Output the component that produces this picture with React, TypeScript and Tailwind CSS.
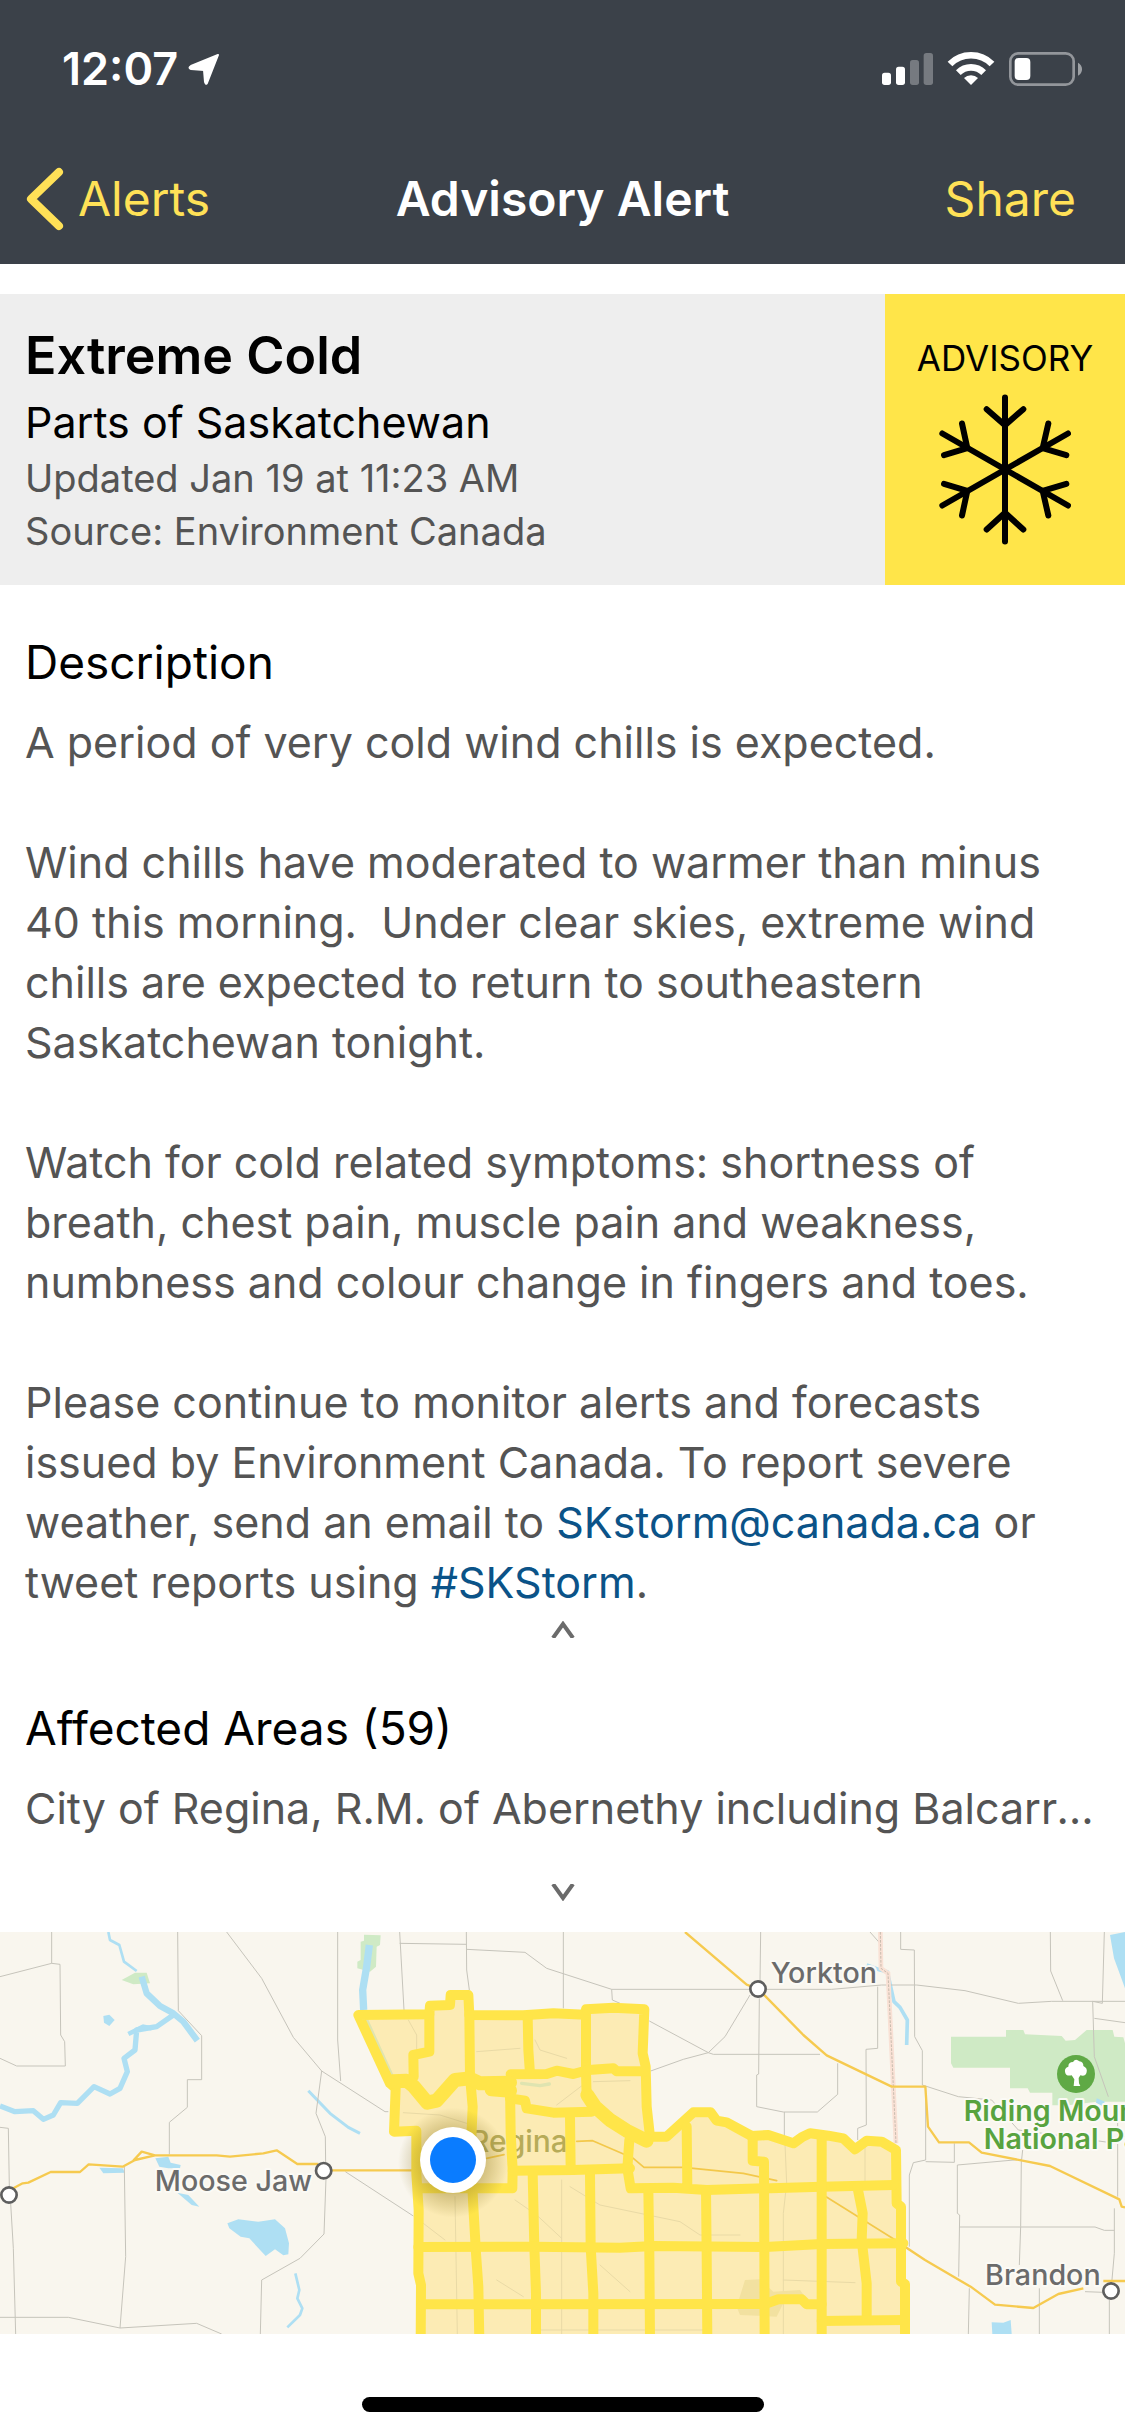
import { useState } from "react";

const AREAS = "City of Regina, R.M. of Abernethy including Balcarres, R.M. of Antler including Redvers";

function StatusIcons() {
  return (
    <svg viewBox="60 60 612 114" className="w-[204px] h-[38px]" aria-hidden="true">
      <g fill="#fff">
        <rect x="66" y="128" width="27" height="37" rx="8" />
        <rect x="108" y="110" width="27" height="55" rx="8" />
        <rect x="150" y="90" width="27" height="75" rx="8" opacity="0.3" />
        <rect x="191" y="69" width="28" height="96" rx="8" opacity="0.3" />
        <path d="M333 165 L312 144 A30 30 0 0 1 354 144 Z" />
        <rect x="464" y="84" width="47" height="66" rx="12" />
        <path d="M654 98 Q666 104 666 118 Q666 131 654 137 Z" opacity="0.5" />
      </g>
      <g fill="none" stroke="#fff" strokeWidth="20">
        <path d="M270 102 A89 89 0 0 1 396 102" />
        <path d="M295 128 A54 54 0 0 1 371 128" />
      </g>
      <rect x="451" y="70" width="190" height="94" rx="24" fill="none" stroke="#fff" strokeOpacity="0.45" strokeWidth="8" />
    </svg>
  );
}

function Snowflake() {
  return (
    <svg viewBox="237 344 396 452" className="w-[132px] h-[151px]" aria-hidden="true">
      <g fill="none" stroke="#000" strokeWidth="18" strokeLinecap="round" strokeLinejoin="round">
        <path d="M435 354 V786 M247 462 L624 678 M624 462 L247 678" />
        <path d="M380 389 L435 437 L490 389 M380 750 L435 700 L490 750" />
        <path d="M306 432 L322 506 L252 527 M565 432 L548 506 L619 527" />
        <path d="M306 708 L322 634 L252 613 M565 708 L548 634 L619 613" />
      </g>
    </svg>
  );
}

function Toggle({ open, label, onClick }: { open: boolean; label: string; onClick: () => void }) {
  return (
    <button onClick={onClick} aria-label={label} aria-expanded={open} className="block mx-auto">
      <svg viewBox="0 0 24 17" className="w-6 h-[17px]" aria-hidden="true">
        <path
          d={open ? "M2 17 L12 3 L22 17" : "M2 0 L12 14 L22 0"}
          fill="none"
          stroke="#6b6b6b"
          strokeWidth="4"
        />
      </svg>
    </button>
  );
}

const OUTLINE =
  "M55 285 L268 283 L270 257 L330 255 L332 225 L385 225 L388 285 L550 286 L640 280 L735 284 L738 268 L820 263 L913 268 L908 400 L917 440 L920 560 L930 650 L980 650 L1060 577 L1112 577 L1130 602 L1160 607 L1235 648 L1285 645 L1360 670 L1385 652 L1410 640 L1465 647 L1510 655 L1545 688 L1580 662 L1625 665 L1668 690 L1670 850 L1683 860 L1683 1085 L1695 1092 L1695 1280 L242 1280 L243 1095 L235 1060 L236 870 L229 760 L229 632 L162 635 L167 505 L150 490 Z";

function AreaMap() {
  return (
    <svg
      viewBox="0 36 3375 1206"
      preserveAspectRatio="xMidYMid slice"
      className="block w-full h-[402px] bg-[#f9f6ee]"
      role="img"
      aria-label="Map of affected areas"
    >
      <defs>
        <radialGradient id="pinShadow">
          <stop offset="0.55" stopColor="#8a7420" stopOpacity="0.38" />
          <stop offset="1" stopColor="#8a7420" stopOpacity="0" />
        </radialGradient>
      </defs>

      {/* Parks */}
      <g fill="#cfeac5">
        <path d="M365 180 L405 158 L440 158 L450 190 L400 193 Z" />
        <path d="M1092 44 L1142 46 L1140 75 L1130 80 L1128 140 L1110 155 L1072 145 L1072 125 L1082 120 L1082 65 L1092 62 Z" />
        <path
          transform="translate(2175)"
          d="M678 350 H843 V330 H895 L900 343 L1010 348 L1022 362 L1050 360 L1085 330 H1163 L1168 350 L1195 352 L1200 370 V545 H1115 L1030 556 H982 V518 H915 L908 505 H855 V443 H685 L678 430 Z"
        />
      </g>

      {/* Water */}
      <g fill="none" stroke="#aedff3" strokeLinejoin="round">
        <path d="M325 36 L330 60 L358 75 L372 125 L410 153" strokeWidth="8" />
        <path d="M425 170 L440 220 L480 258 L520 280 L550 305 L592 362" strokeWidth="19" />
        <path d="M520 285 L470 320 L410 330 L405 390 L372 415 L382 455 L360 505 L330 522 L282 500 L232 550 L182 548 L160 585 L130 598 L100 572 L45 575 L0 558" strokeWidth="16" />
        <path d="M385 342 L430 320 L455 325" strokeWidth="14" />
        <path d="M925 512 L990 580 L1045 622 L1080 640" strokeWidth="9" />
        <path d="M1108 75 L1100 140 L1088 210 L1091 270" strokeWidth="22" />
        <path d="M886 1060 L898 1110 L892 1135 L907 1165 L900 1185 L862 1222" strokeWidth="8" />
        <path d="M2600 135 L2640 150 L2662 155 L2682 245 L2700 262 L2722 300 L2720 375" strokeWidth="11" />
      </g>
      <g fill="#aedff3">
        <path d="M310 288 L328 284 L344 300 L328 318 L312 308 Z" />
        <path d="M298 743 L368 745 L375 758 L310 760 Z" />
        <path d="M466 715 L505 710 L512 728 L542 735 L540 745 L505 745 L478 740 Z" />
        <path d="M532 818 L565 825 L598 860 L575 855 Z" />
        <path d="M682 910 L715 898 L775 905 L825 898 L855 925 L867 970 L865 1003 L850 1006 L825 988 L797 1008 L748 955 L722 950 L688 925 Z" />
        <path d="M3330 45 L3375 36 V205 L3355 150 L3342 115 Z" />
        <path d="M3290 535 L3315 545 L3305 557 L3288 548 Z" />
        <path d="M2975 1207 L3010 1208 L3032 1200 L3035 1242 H2977 Z" />
      </g>

      {/* Secondary roads */}
      <g fill="none" stroke="#c6c4bb" strokeWidth="3">
        <path d="M155 36 V130 L0 170 M155 130 L180 133 L182 345 L194 365 L196 438 H50 L0 415" />
        <path d="M533 36 L535 272 L605 347 V479 H562 V562 L508 607 V703" />
        <path d="M680 36 L785 175 L880 352 L965 453 L1155 575 H1165 M1013 36 V360 L1022 483 M965 453 L948 580 L976 650 L977 735 M978 775 L972 942 L900 1015 L785 1080 L781 1242" />
        <path d="M0 622 L25 625 L28 800 M32 850 L40 985 L47 1242 M0 1192 H205 L360 1224 L590 1210 L665 1242 M373 740 L377 1010 L360 1224" />
        <path d="M1036 755 L1240 888" />
        <g transform="translate(1020)">
          <path d="M179 36 L192 270 M179 70 L379 73 M379 36 L380 150 L388 210 M380 88 L555 97 L620 145 L815 208 H1250 M670 36 V265 M815 208 L817 240 L840 250 M928 303 L1105 398 L1155 350 L1230 225 M1105 398 L1120 403 H1440 M932 453 L1030 418 L1105 398" />
        </g>
        <g transform="translate(2175)">
          <path d="M107 36 L105 185 M125 208 H320 L470 195 H575 L720 212 L880 250 L980 244 H1200 M103 235 L101 462 L95 465 V560 L175 576 H277 L338 523 V430 M178 576 V650" />
          <path d="M458 200 V385 L423 388 L424 615 L398 625 V660 M435 36 L465 70" />
          <path d="M527 36 V88 L568 90 L569 350 L592 392 V495 L700 530 L800 540 L880 630 L1150 667 M602 500 V720 L565 728 L553 765 V980 M602 725 L688 727 V670 M697 735 L890 718 L893 690 M697 735 V880 L704 885 L701 1070 M889 718 L887 920 L883 1035 M704 921 H1110 L1138 931 H1168 M1168 865 V1000 L1160 1090 M1153 1140 V1242 M943 1105 V1242 M733 1105 L730 1242 M1178 560 V830 M976 36 L977 153 L1013 242 M1138 36 L1132 250 L1103 244 L1108 410 L1150 530 M1108 295 L1200 308 M1080 1115 L1135 1117" />
        </g>
      </g>
      <path d="M2641 36 L2643 145 L2664 160 L2688 670" fill="none" stroke="#f9e1d5" strokeWidth="14" />
      <path d="M2641 36 L2643 145 L2664 160 L2688 670" fill="none" stroke="#c9bcae" strokeWidth="3" strokeDasharray="8 4" />

      {/* Highways */}
      <g fill="none" stroke="#f6ca4f" strokeWidth="7" strokeLinejoin="round">
        <path d="M30 810 L68 790 L85 788 L152 756 H240 L266 733 L368 740 L405 720 L465 706 L425 695 L400 722 M465 706 H650 L690 710 L790 700 L830 691 L892 732 H955 M990 751 H1240" />
        <path d="M2055 36 L2240 194 L2275 207 L2410 345 L2480 406 L2675 500 H2776 L2784 620 L2817 667 H2907 L2945 698 L3150 738 L3358 838 L3365 860 L3375 862" />
        <path d="M2715 980 L2775 1020 L2912 1100 L2985 1154 L3100 1164 L3175 1122 L3250 1105 M3310 1083 H3375" />
      </g>

      {/* Warning polygons */}
      <g transform="translate(1020)" strokeLinejoin="round" strokeLinecap="round">
        <path d={OUTLINE} fill="#fcebb4" />
        <g fill="none" stroke="#e9daa6" strokeWidth="3">
          <path d="M205 300 L230 345 V400 M190 578 L300 585 L380 610 M410 395 L540 385 M585 360 L600 390 L680 415 M650 555 L735 490 M760 485 L870 482 M345 830 L352 1242 M250 910 L315 960 M525 840 L590 885 L665 955 M665 780 V1242 M690 800 L780 855 L1020 905 L1080 945 H1200 M780 1035 L870 1115 M470 1080 L550 1130 M600 1230 H1100 M1335 670 L1340 790 L1330 880 V1242 M1575 680 V790 M1330 1080 L1545 1088" />
        </g>
        <path d="M1215 1080 L1260 1078 L1300 1115 L1380 1110 L1395 1130 L1330 1150 L1310 1190 L1200 1185 L1190 1160 Z" fill="#f2e1a0" />
        <path d="M80 300 L155 465 M545 490 L600 497 L628 492" fill="none" stroke="#dfe4b0" strokeWidth="10" />
        <path d="M440 715 L492 704 M710 664 L758 662 L880 715 L912 742 L1030 742 L1210 760 L1310 782 M1445 822 L1690 975" fill="none" stroke="#f3c84a" strokeWidth="5" />
        <text x="390" y="695" fill="#b7ab58" className="text-[90px] font-medium">Regina</text>

        <g fill="none" stroke="#ffe549" strokeWidth="30">
          <path d={OUTLINE} />
          <path d="M268 283 L268 395 L220 405 L221 470" />
          <path d="M388 285 L390 470 L398 560 L392 700 L400 860 L408 1000 L415 1100 L418 1260" />
          <path d="M563 290 L565 390 L570 460 M738 284 L738 460 L740 530" />
          <path d="M512 463 L620 462 L650 452 L700 462 L745 450 L820 445 L830 454 L915 454" />
          <path d="M510 500 L512 640 L518 750 L517 805 L245 805" />
          <path d="M510 535 L555 542 L560 565 L640 578 L755 575 M690 590 L692 745 M518 752 L700 750 L870 745" />
          <path d="M868 660 L862 745 L872 805 L1000 803 L1100 810 L1445 800 L1660 795 M1040 620 L1042 800" />
          <path d="M1238 655 L1238 722 L1272 725 L1274 1260 M1445 650 V1260 M1552 800 L1568 880 L1565 960 L1580 1090 L1580 1200" />
          <path d="M578 760 L583 980 L588 1120 L588 1260 M750 760 L752 980 L760 1120 L760 1260 M925 810 L928 1000 L930 1260 M1098 810 L1100 1000 L1102 1260" />
          <path d="M235 981 L580 980 L840 983 L940 978 L1275 981 L1445 972 L1690 970" />
          <path d="M243 1153 L1275 1152 L1315 1138 L1385 1138 L1400 1153 H1445 M1445 1203 L1690 1200" />
        </g>
        <g fill="none" stroke="#ffe549" strokeWidth="42">
          <path d="M158 484 L200 482 L222 500 L262 548 L290 542 L345 480 L388 475 L420 490 L510 488 M455 508 L510 512" />
          <path d="M742 525 L765 560 L810 600 L860 632 L920 662" />
        </g>
        <circle cx="339" cy="728" r="165" fill="url(#pinShadow)" />
        <circle cx="339" cy="720" r="99" fill="#fff" />
        <circle cx="339" cy="720" r="69" fill="#0a7cff" />
      </g>

      {/* Towns */}
      <g fill="#fff" stroke="#5e5e5e" strokeWidth="8">
        <circle cx="27" cy="825" r="23" />
        <circle cx="971" cy="752" r="23" />
        <circle cx="2274" cy="207" r="23" />
        <circle cx="3333" cy="1113" r="23" />
      </g>
      <g
        fill="#6b6b6b"
        stroke="#fbfaf5"
        strokeWidth="12"
        strokeLinejoin="round"
        paintOrder="stroke"
        className="text-[86px] font-medium"
      >
        <text x="936" y="814" textAnchor="end">Moose Jaw</text>
        <text x="2312" y="188">Yorkton</text>
        <text x="3302" y="1094" textAnchor="end">Brandon</text>
      </g>

      {/* National park */}
      <g transform="translate(2175)">
        <circle cx="1053" cy="462" r="57" fill="#5fa945" />
        <path
          d="M1046 498 L1048 478 L1040 466 Q1022 470 1020 455 Q1018 444 1030 440 Q1030 426 1044 426 Q1052 414 1063 424 Q1076 426 1075 438 Q1088 444 1085 456 Q1083 470 1066 466 L1061 474 L1062 490 L1066 498 Z"
          fill="#fff"
        />
        <g
          fill="#58a33f"
          stroke="#fbfaf5"
          strokeWidth="12"
          strokeLinejoin="round"
          paintOrder="stroke"
          className="text-[86px] font-semibold"
        >
          <text x="716" y="602">Riding Mountain</text>
          <text x="776" y="688">National Park</text>
        </g>
      </g>
    </svg>
  );
}

export default function App() {
  const [showDescription, setShowDescription] = useState(true);
  const [showAreas, setShowAreas] = useState(false);

  return (
    <div className="min-h-screen bg-white text-black font-['Inter',sans-serif]">
      <header className="bg-[#3b4149] h-[264px]">
        {/* Status bar */}
        <div className="flex items-center justify-between h-[138px] pl-[62px] pr-[41px]">
          <div className="flex items-center gap-2.5 text-white text-[45px] leading-[52px] font-semibold">
            <span>12:07</span>
            <svg viewBox="0 0 31 31" className="w-[31px] h-[31px]" aria-hidden="true">
              <path d="M30 1 L19 29 Q18 31 17 28 L16 16 L3 15 Q0 14 3 12 Z" fill="#fff" stroke="#fff" strokeWidth="2" strokeLinejoin="round" />
            </svg>
          </div>
          <StatusIcons />
        </div>

        {/* Nav bar */}
        <nav className="grid grid-cols-[1fr_auto_1fr] items-center h-[122px] text-[48px] leading-[60px] text-[#ffe157]">
          <a href="#alerts" className="flex items-center gap-3.5 pl-[25px]">
            <svg viewBox="0 0 39 64" className="w-[39px] h-16" aria-hidden="true">
              <path d="M34 5 L6 32 L34 59" fill="none" stroke="currentColor" strokeWidth="8" strokeLinecap="round" strokeLinejoin="round" />
            </svg>
            Alerts
          </a>
          <h1 className="text-white font-semibold">Advisory Alert</h1>
          <button className="justify-self-end pr-[49px]">Share</button>
        </nav>
      </header>

      <main>
        {/* Summary */}
        <section className="mt-[30px] flex bg-[#eeeeee]">
          <div className="flex-1 pl-[25px] pt-7 pb-[27px]">
            <h2 className="text-[52px] leading-[68px] font-semibold">Extreme Cold</h2>
            <p className="mt-0.5 text-[43px] leading-[60px]">Parts of Saskatchewan</p>
            <p className="text-[38px] leading-[53px] text-[#545454]">Updated Jan 19 at 11:23 AM</p>
            <p className="text-[38px] leading-[53px] text-[#545454]">Source: Environment Canada</p>
          </div>
          <div className="w-60 bg-[#ffe549] flex flex-col items-center pt-10">
            <span className="text-[35px] leading-[48px]">ADVISORY</span>
            <div className="mt-3">
              <Snowflake />
            </div>
          </div>
        </section>

        {/* Description */}
        <section className="px-[25px] pt-[47px]">
          <h2 className="text-[46px] leading-[60px]">Description</h2>
          <div
            className={`mt-5 mb-[9px] flex flex-col gap-[60px] text-[43px] leading-[60px] text-[#545454] ${
              showDescription ? "" : "h-[60px] overflow-hidden"
            }`}
          >
            <p>A period of very cold wind chills is expected.</p>
            <p className="whitespace-pre-wrap">
              Wind chills have moderated to warmer than minus 40 this morning.{"  "}Under clear skies, extreme wind chills are expected to return to southeastern Saskatchewan tonight.
            </p>
            <p>
              Watch for cold related symptoms: shortness of breath, chest pain, muscle pain and weakness, numbness and colour change in fingers and toes.
            </p>
            <p>
              Please continue to monitor alerts and forecasts issued by Environment Canada. To report severe weather, send an email to{" "}
              <a href="mailto:SKstorm@canada.ca" className="text-[#0b5388]">SKstorm@canada.ca</a> or tweet reports using{" "}
              <a href="#SKStorm" className="text-[#0b5388]">#SKStorm</a>.
            </p>
          </div>
          <Toggle open={showDescription} label="Toggle description" onClick={() => setShowDescription(!showDescription)} />
        </section>

        {/* Affected areas */}
        <section className="px-[25px] pt-[60px] pb-[31px]">
          <h2 className="text-[46px] leading-[60px]">Affected Areas (59)</h2>
          <p className={`mt-5 mb-[46px] text-[43px] leading-[60px] text-[#545454] ${showAreas ? "" : "truncate"}`}>
            {AREAS}
          </p>
          <Toggle open={showAreas} label="Toggle affected areas" onClick={() => setShowAreas(!showAreas)} />
        </section>

        <AreaMap />
      </main>

      {/* Home indicator */}
      <div className="mt-[63px] mx-auto w-[402px] h-[15px] rounded-full bg-black" />
    </div>
  );
}
